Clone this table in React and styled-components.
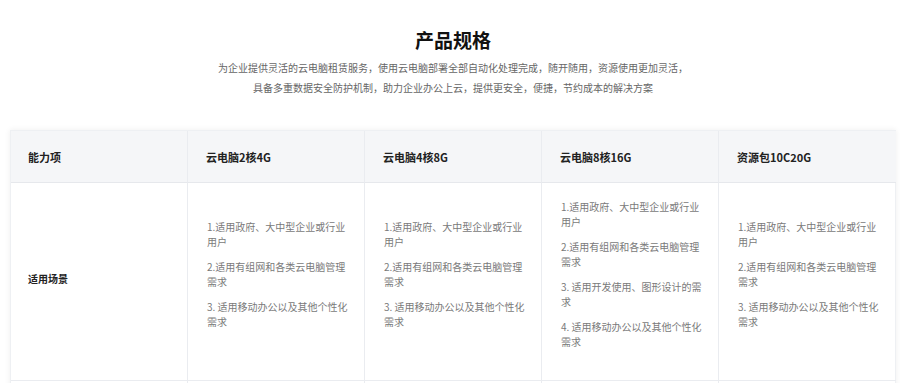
import React from "react";
import styled, { createGlobalStyle } from "styled-components";

const GlobalStyle = createGlobalStyle`
  body {
    margin: 0;
    background: #ffffff;
    font-family: "Noto Sans CJK SC", "Noto Sans", Arial, sans-serif;
  }
`;

const Section = styled.section`
  padding: 27px 4px 40px 10px;
`;

const Title = styled.h2`
  margin: 0;
  text-align: center;
  font-size: 19px;
  line-height: 26px;
  font-weight: 700;
  color: #111;
`;

const Desc = styled.p`
  margin: 5px 0 32px;
  text-align: center;
  font-size: 10px;
  line-height: 20px;
  color: #666;
`;

const Table = styled.div`
  width: 886px;
  display: grid;
  grid-template-columns: repeat(5, 177px);
  box-shadow: 0 0 6px rgba(0, 0, 0, 0.07);
  border: 1px solid #eef0f3;
  box-sizing: border-box;
`;

const HeadCell = styled.div`
  height: 51px;
  display: flex;
  align-items: center;
  padding-left: ${({ first }) => (first ? "17px" : "18px")};
  background: #f5f6f8;
  border-right: ${({ last }) => (last ? "none" : "1px solid #eaecf0")};
  border-bottom: 1px solid #e6e8ec;
  font-size: 11px;
  font-weight: 700;
  color: #222;
`;

const BodyCell = styled.div`
  box-sizing: border-box;
  min-height: ${({ short }) => (short ? "60px" : "198px")};
  display: flex;
  flex-direction: column;
  justify-content: center;
  padding: 0 14px 6px ${({ first }) => (first ? "17px" : "19px")};
  border-right: ${({ last }) => (last ? "none" : "1px solid #eaecf0")};
  border-bottom: 1px solid #eaecf0;
`;

const RowLabel = styled.div`
  font-size: 10px;
  font-weight: 700;
  color: #222;
`;

const Item = styled.p`
  margin: 0 0 10px;
  font-size: 10px;
  line-height: 15px;
  color: #7a7a7a;
`;

const columns = ["云电脑2核4G", "云电脑4核8G", "云电脑8核16G", "资源包10C20G"];

const common = [
  "1.适用政府、大中型企业或行业用户",
  "2.适用有组网和各类云电脑管理需求",
  "3. 适用移动办公以及其他个性化需求",
];

const scenes = [
  common,
  common,
  [
    "1.适用政府、大中型企业或行业用户",
    "2.适用有组网和各类云电脑管理需求",
    "3. 适用开发使用、图形设计的需求",
    "4. 适用移动办公以及其他个性化需求",
  ],
  common,
];

export default function App() {
  return (
    <>
      <GlobalStyle />
      <Section>
        <Title>产品规格</Title>
        <Desc>
          为企业提供灵活的云电脑租赁服务，使用云电脑部署全部自动化处理完成，随开随用，资源使用更加灵活，
          <br />
          具备多重数据安全防护机制，助力企业办公上云，提供更安全，便捷，节约成本的解决方案
        </Desc>
        <Table>
          <HeadCell first>能力项</HeadCell>
          {columns.map((c, i) => (
            <HeadCell key={c} last={i === columns.length - 1}>
              {c}
            </HeadCell>
          ))}

          <BodyCell first>
            <RowLabel>适用场景</RowLabel>
          </BodyCell>
          {scenes.map((list, i) => (
            <BodyCell key={i} last={i === scenes.length - 1}>
              {list.map((t) => (
                <Item key={t}>{t}</Item>
              ))}
            </BodyCell>
          ))}

          {[0, 1, 2, 3, 4].map((i) => (
            <BodyCell key={i} short first={i === 0} last={i === 4} />
          ))}
        </Table>
      </Section>
    </>
  );
}
